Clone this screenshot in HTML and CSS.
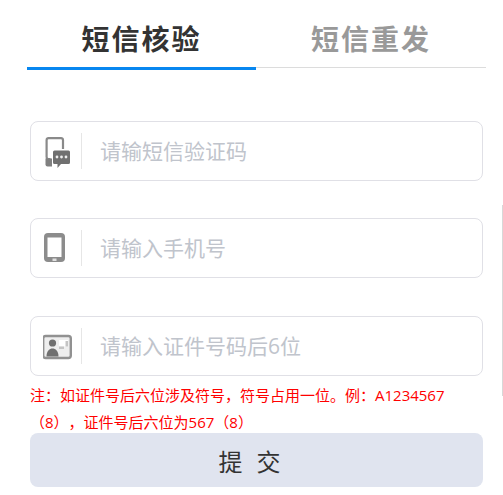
FILE: index.html
```html
<!DOCTYPE html>
<html lang="zh-CN">
<head>
  <meta charset="UTF-8">
  <meta name="viewport" content="width=device-width, initial-scale=1.0">
  <title>短信核验</title>
  <link rel="stylesheet" href="styles.css">
</head>
<body>

  <div class="edge-line"></div>

  <div class="tabs">
    <div class="tab active">短信核验</div>
    <div class="tab">短信重发</div>
  </div>

  <form class="verify-form">
    <div class="field">
      <span class="field-icon">
        <svg width="28" height="36" viewBox="0 0 28 36">
          <path d="M7.500 26H5A2 2 0 0 1 3.600 24V7A2 2 0 0 1 5.500 5.200H18A2 2 0 0 1 20 7V16" fill="none" stroke="#8a8a8a" stroke-width="2.200"/>
          <path d="M2.500 25.500H9V33.500H4.500A2 2 0 0 1 2.500 31.500Z" fill="#808080"/>
          <path d="M11.500 17.500H25.500A1.500 1.500 0 0 1 27 19V29.500A1.500 1.500 0 0 1 25.500 31H18L14.500 35V31H11.500A1.500 1.500 0 0 1 10 29.500V19A1.500 1.500 0 0 1 11.500 17.500Z" fill="#707070"/>
          <circle cx="14" cy="24" r="1.400" fill="#eee"/>
          <circle cx="18.500" cy="24" r="1.400" fill="#eee"/>
          <circle cx="23" cy="24" r="1.400" fill="#eee"/>
        </svg>
      </span>
      <input type="text" placeholder="请输短信验证码">
    </div>

    <div class="field">
      <span class="field-icon">
        <svg width="28" height="36" viewBox="0 0 28 36">
          <rect x="1" y="3" width="21" height="29" rx="4" fill="#8c8c8c"/>
          <rect x="4.500" y="7.500" width="14" height="19.500" fill="#fff"/>
          <rect x="9.500" y="28.500" width="4" height="2.500" fill="#e0e0e0"/>
        </svg>
      </span>
      <input type="text" placeholder="请输入手机号">
    </div>

    <div class="field">
      <span class="field-icon">
        <svg width="30" height="36" viewBox="0 0 30 36">
          <rect x="0.200" y="8" width="27.600" height="22" rx="2.500" fill="#eee" stroke="#919191" stroke-width="2.400"/>
          <circle cx="9.500" cy="15" r="3.600" fill="#707070"/>
          <path d="M3.500 28.500C3.500 23 6.500 20.500 9.500 20.500S15.500 23 15.500 28.500Z" fill="#707070"/>
          <path d="M16 12H25V18.500H16Z" fill="#fff"/>
          <path d="M16 18.500H21V21H16Z" fill="#c4c4c4"/>
          <path d="M22.500 13H25V18.500H22.500Z" fill="#c4c4c4"/>
        </svg>
      </span>
      <input type="text" placeholder="请输入证件号码后6位">
    </div>

    <p class="note">注：如证件号后六位涉及符号，符号占用一位。例：A1234567（8），证件号后六位为567（8）</p>

    <button type="button" class="submit-btn">提 交</button>
  </form>

</body>
</html>
```

FILE: styles.css
```css
* {
  margin: 0;
  padding: 0;
  box-sizing: border-box;
}

html, body {
  height: 495px;
  overflow: hidden;
}

body {
  font-family: 'Open Sans', 'Noto Sans CJK SC', sans-serif;
  background: #fff;
  padding-top: 17px;
  text-spacing-trim: space-all;
}

.edge-line {
  position: absolute;
  top: 205px;
  right: 0;
  width: 1px;
  height: 191px;
  background: #d8d8d8;
}

.tabs {
  display: flex;
  height: 51px;
  margin: 0 17px 0 27px;
  border-bottom: 1px solid #dcdcdc;
}

.tab {
  width: 229px;
  height: 53px;
  font-size: 28px;
  font-weight: bold;
  line-height: 45px;
  letter-spacing: 2px;
  text-align: center;
  color: #999;
}

.tab.active {
  padding-left: 1px;
  padding-right: 1px;
  color: #333;
  border-bottom: 3px solid #0787f0;
}

.tab + .tab {
  width: 230px;
}

.verify-form {
  padding: 53px 20px 0 30px;
}

.field {
  display: flex;
  align-items: center;
  height: 60px;
  margin-bottom: 37px;
  border: 1px solid #e0e0e6;
  border-radius: 8px;
}

.field:nth-child(2) {
  margin-bottom: 38px;
}

.field:nth-child(3) {
  margin-bottom: 0;
}

.field-icon {
  display: flex;
  width: 51px;
  height: 36px;
  padding-left: 12px;
  border-right: 1px solid #e6e6e6;
  flex-shrink: 0;
}

.field-icon svg {
  filter: blur(0.5px);
}

.field input {
  flex: 1;
  min-width: 0;
  height: 100%;
  padding-left: 18px;
  border: none;
  outline: none;
  background: transparent;
  font-family: inherit;
  font-size: 21px;
}

.field input::placeholder {
  color: #c0c4cc;
}

.note {
  margin-top: 6px;
  font-size: 15px;
  line-height: 27px;
  color: #f00;
}

.submit-btn {
  display: block;
  width: 100%;
  height: 54px;
  margin-top: -3px;
  padding-right: 10px;
  border: none;
  border-radius: 8px;
  background: #e0e4ef;
  font-family: inherit;
  font-size: 24px;
  letter-spacing: 4px;
  color: #333;
}
```
